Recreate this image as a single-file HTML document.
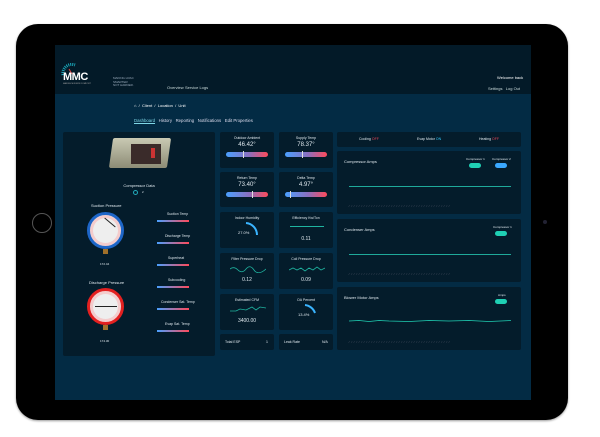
<!DOCTYPE html>
<html><head><meta charset="utf-8"><style>
*{margin:0;padding:0;box-sizing:border-box}
body{width:600px;height:437px;background:#fff;position:relative;overflow:hidden;font-family:"Liberation Sans",sans-serif;color:#dfe8ee}
.a{position:absolute}
.tab{left:16px;top:24px;width:552px;height:396px;background:#000;border-radius:22px;box-shadow:0 1px 2px #999}
.scr{left:55px;top:45px;width:476px;height:355px;background:#032b44;overflow:hidden}
.hdr{left:0;top:0;width:476px;height:49px;background:#031a28}
.t{position:absolute;font-size:4px;white-space:nowrap}
.card{position:absolute;background:#041c2b;border-radius:2px}
.c{text-align:center;width:100%;left:0}
.bar{position:absolute;height:5px;border-radius:3px;background:linear-gradient(90deg,#4aa0ff,#8a6fbf 55%,#ff4a5a)}
.mk{position:absolute;width:1px;height:7px;background:#ddd;top:-1px}
.sl{position:absolute;height:2px;background:linear-gradient(90deg,#4aa0ff,#ff4a5a);width:32px}
.pill{position:absolute;height:5px;width:12px;border-radius:3px;background:#1fd0b4}
</style></head><body>
<div class="a tab"></div>
<div class="a" style="left:32px;top:213px;width:20px;height:20px;border:1px solid #555;border-radius:50%"></div>
<div class="a" style="left:543px;top:220px;width:4px;height:4px;background:#223;border-radius:50%"></div>
<div class="a scr">
 <div class="a hdr">
  <svg class="a" style="left:6px;top:18px" width="20" height="14"><path d="M2 12 A9 9 0 0 1 14 2" stroke="#1aa5b8" stroke-width="3" fill="none" stroke-dasharray="1 1"/><path d="M8 6 l3 5" stroke="#e04040" stroke-width="1"/></svg>
  <div class="t" style="left:8px;top:26px;font-size:11px;font-weight:bold;color:#fff;letter-spacing:-0.5px">MMC</div>
  <div class="t" style="left:8px;top:38px;font-size:2px;color:#aaa">MAKING MODERN COMFORT</div>
  <div class="t" style="left:58px;top:32px;font-size:3px;line-height:3.5px;color:#9ab">MAKING HVAC<br>SMARTER<br>NOT HARDER.</div>
  <div class="t" style="left:112px;top:40px;color:#cdd">Overview</div>
  <div class="t" style="left:130px;top:40px;color:#cdd">Service Logs</div>
  <div class="t" style="left:442px;top:30px;color:#fff">Welcome back</div>
  <div class="t" style="left:433px;top:41px;color:#cdd">Settings&nbsp;&nbsp; Log Out</div>
 </div>
 <div class="t" style="left:79px;top:58px;color:#fff">⌂ &nbsp;/&nbsp; Client &nbsp;/&nbsp; Location &nbsp;/&nbsp; Unit</div>
 <div class="t" style="left:79px;top:73px;color:#dde;font-size:4.3px"><span style="color:#7fd6e6;text-decoration:underline">Dashboard</span>&nbsp;&nbsp; History&nbsp;&nbsp; Reporting&nbsp;&nbsp; Notifications&nbsp;&nbsp; Edit Properties</div>

 <!-- left panel -->
 <div class="card" style="left:8px;top:87px;width:152px;height:224px">
  <div class="a" style="left:48px;top:6px;width:58px;height:30px;background:linear-gradient(#c9c9b3,#8d8c76);transform:skewX(-8deg);border-radius:2px"></div>
  <div class="a" style="left:68px;top:12px;width:30px;height:20px;background:#3a2b2a"></div>
  <div class="a" style="left:88px;top:16px;width:4px;height:10px;background:#c33"></div>
  <div class="t c" style="top:51px">Compressor Data</div>
  <div class="a" style="left:70px;top:58px;width:5px;height:5px;border:1px solid #2ab;border-radius:50%"></div>
  <div class="t" style="left:79px;top:58px;font-size:3px">2</div>
  <div class="t" style="left:28px;top:71px">Suction Pressure</div>
  <div class="a" style="left:24px;top:80px;width:37px;height:37px;border-radius:50%;background:#eee;border:3px solid #1e66c8;box-shadow:inset 0 0 0 3px #f4cccc"></div>
  <div class="a" style="left:40px;top:90px;width:14px;height:1px;background:#222;transform:rotate(40deg)"></div>
  <div class="a" style="left:40px;top:117px;width:5px;height:5px;background:#a0702a"></div>
  <div class="t" style="left:37px;top:130px;font-size:3px">172.44</div>
  <div class="t" style="left:26px;top:148px">Discharge Pressure</div>
  <div class="a" style="left:24px;top:156px;width:37px;height:37px;border-radius:50%;background:#eee;border:3px solid #e32020;box-shadow:inset 0 0 0 3px #f4cccc"></div>
  <div class="a" style="left:32px;top:174px;width:22px;height:1px;background:#222"></div>
  <div class="a" style="left:40px;top:193px;width:5px;height:5px;background:#a0702a"></div>
  <div class="t" style="left:37px;top:207px;font-size:3px">174.30</div>
  <div class="t" style="left:104px;top:80px;font-size:3.5px">Suction Temp</div><div class="sl" style="left:94px;top:88px"></div>
  <div class="t" style="left:102px;top:102px;font-size:3.5px">Discharge Temp</div><div class="sl" style="left:94px;top:110px"></div>
  <div class="t" style="left:105px;top:124px;font-size:3.5px">Superheat</div><div class="sl" style="left:94px;top:132px"></div>
  <div class="t" style="left:105px;top:146px;font-size:3.5px">Subcooling</div><div class="sl" style="left:94px;top:154px"></div>
  <div class="t" style="left:98px;top:168px;font-size:3.5px">Condenser Sat. Temp</div><div class="sl" style="left:94px;top:176px"></div>
  <div class="t" style="left:102px;top:190px;font-size:3.5px">Evap Sat. Temp</div><div class="sl" style="left:94px;top:198px"></div>
 </div>

 <!-- middle cards -->
 <div class="card" style="left:165px;top:87px;width:54px;height:36px"><div class="t c" style="top:4px;font-size:3.5px">Outdoor Ambient</div><div class="t c" style="top:10px;font-size:6px">46.42°</div><div class="bar" style="left:6px;top:20px;width:42px"><div class="mk" style="left:17px"></div></div></div>
 <div class="card" style="left:224px;top:87px;width:54px;height:36px"><div class="t c" style="top:4px;font-size:3.5px">Supply Temp</div><div class="t c" style="top:10px;font-size:6px">78.37°</div><div class="bar" style="left:6px;top:20px;width:42px"><div class="mk" style="left:17px"></div></div></div>
 <div class="card" style="left:165px;top:127px;width:54px;height:35px"><div class="t c" style="top:4px;font-size:3.5px">Return Temp</div><div class="t c" style="top:10px;font-size:6px">73.40°</div><div class="bar" style="left:6px;top:20px;width:42px"><div class="mk" style="left:26px"></div></div></div>
 <div class="card" style="left:224px;top:127px;width:54px;height:35px"><div class="t c" style="top:4px;font-size:3.5px">Delta Temp</div><div class="t c" style="top:10px;font-size:6px">4.97°</div><div class="bar" style="left:6px;top:20px;width:42px"><div class="mk" style="left:5px"></div></div></div>
 <div class="card" style="left:165px;top:167px;width:54px;height:36px"><div class="t c" style="top:4px;font-size:3.5px">Indoor Humidity</div><svg class="a" style="left:25px;top:10px" width="16" height="16"><path d="M1 1 A12 12 0 0 1 12 13" stroke="#3ab4ff" stroke-width="2" fill="none"/></svg><div class="t" style="left:18px;top:18px;font-size:4px">27.0%</div></div>
 <div class="card" style="left:224px;top:167px;width:54px;height:36px"><div class="t c" style="top:4px;font-size:3.5px">Efficiency Kw/Ton</div><div class="a" style="left:11px;top:14px;width:34px;height:1px;background:#1fb4a0"></div><div class="t c" style="top:24px;font-size:5px">0.11</div></div>
 <div class="card" style="left:165px;top:208px;width:54px;height:36px"><div class="t c" style="top:4px;font-size:3.5px">Filter Pressure Drop</div><svg class="a" style="left:10px;top:12px" width="36" height="8"><path d="M0 4 Q4 1 8 5 T16 4 T24 5 T36 4" stroke="#1fb4a0" fill="none" stroke-width="0.8"/></svg><div class="t c" style="top:24px;font-size:5px">0.12</div></div>
 <div class="card" style="left:224px;top:208px;width:54px;height:36px"><div class="t c" style="top:4px;font-size:3.5px">Coil Pressure Drop</div><svg class="a" style="left:10px;top:12px" width="36" height="8"><path d="M0 5 L4 3 L8 5 L12 3 L16 6 L20 3 L24 5 L28 2 L32 5 L36 3" stroke="#1fb4a0" fill="none" stroke-width="0.8"/></svg><div class="t c" style="top:24px;font-size:5px">0.09</div></div>
 <div class="card" style="left:165px;top:249px;width:54px;height:36px"><div class="t c" style="top:4px;font-size:3.5px">Estimated CFM</div><svg class="a" style="left:10px;top:10px" width="36" height="10"><path d="M0 7 L6 7 L10 5 L16 6 L22 3 L26 6 L30 3 L36 4" stroke="#1fb4a0" fill="none" stroke-width="0.8"/></svg><div class="t c" style="top:24px;font-size:5px">3400.00</div></div>
 <div class="card" style="left:224px;top:249px;width:54px;height:36px"><div class="t c" style="top:4px;font-size:3.5px">OA Percent</div><svg class="a" style="left:25px;top:10px" width="16" height="16"><path d="M1 1 A12 12 0 0 1 11 9" stroke="#3ab4ff" stroke-width="2" fill="none"/></svg><div class="t" style="left:19px;top:18px;font-size:4px">13.4%</div></div>
 <div class="card" style="left:165px;top:289px;width:54px;height:16px"><div class="t" style="left:5px;top:6px;font-size:3.5px">Total ESP</div><div class="t" style="left:46px;top:6px;font-size:3.5px">1</div></div>
 <div class="card" style="left:224px;top:289px;width:54px;height:16px"><div class="t" style="left:5px;top:6px;font-size:3.5px">Leak Rate</div><div class="t" style="left:43px;top:6px;font-size:3.5px">N/A</div></div>

 <!-- right column -->
 <div class="card" style="left:282px;top:87px;width:184px;height:15px"><div class="t" style="left:22px;top:5px;font-size:3.5px">Cooling <span style="color:#e45">OFF</span></div><div class="t" style="left:80px;top:5px;font-size:3.5px">Evap Motor <span style="color:#3cf">ON</span></div><div class="t" style="left:142px;top:5px;font-size:3.5px">Heating <span style="color:#e45">OFF</span></div></div>
 <div class="card" style="left:282px;top:106px;width:184px;height:63px"><div class="t" style="left:7px;top:8px;font-size:4px">Compressor Amps</div><div class="t" style="left:129px;top:6px;font-size:3px">Compressor 1</div><div class="t" style="left:155px;top:6px;font-size:3px">Compressor 2</div><div class="pill" style="left:132px;top:12px"></div><div class="pill" style="left:158px;top:12px;background:#3aa8ff"></div><div class="a" style="left:12px;top:35px;width:162px;height:1px;background:#1fa99a"></div><div class="t" style="left:12px;top:53px;font-size:3px;color:#667;letter-spacing:2px">⁄⁄⁄⁄⁄⁄⁄⁄⁄⁄⁄⁄⁄⁄⁄⁄⁄⁄⁄⁄⁄⁄⁄⁄⁄⁄⁄⁄⁄⁄⁄⁄⁄⁄⁄⁄⁄⁄⁄⁄⁄</div></div>
 <div class="card" style="left:282px;top:174px;width:184px;height:63px"><div class="t" style="left:7px;top:8px;font-size:4px">Condenser Amps</div><div class="t" style="left:156px;top:6px;font-size:3px">Compressor 1</div><div class="pill" style="left:158px;top:12px"></div><div class="a" style="left:12px;top:35px;width:162px;height:1px;background:#1fa99a"></div><div class="t" style="left:12px;top:53px;font-size:3px;color:#667;letter-spacing:2px">⁄⁄⁄⁄⁄⁄⁄⁄⁄⁄⁄⁄⁄⁄⁄⁄⁄⁄⁄⁄⁄⁄⁄⁄⁄⁄⁄⁄⁄⁄⁄⁄⁄⁄⁄⁄⁄⁄⁄⁄⁄</div></div>
 <div class="card" style="left:282px;top:242px;width:184px;height:63px"><div class="t" style="left:7px;top:8px;font-size:4px">Blower Motor Amps</div><div class="t" style="left:161px;top:6px;font-size:3px">Amps</div><div class="pill" style="left:158px;top:12px"></div><svg class="a" style="left:12px;top:32px" width="162" height="4"><path d="M0 2 L10 1.5 L20 2.5 L30 1.5 L40 2 L60 2.5 L80 1.5 L100 2 L120 1.5 L140 2.5 L162 1.5" stroke="#1fd0b4" fill="none" stroke-width="0.8"/></svg><div class="t" style="left:12px;top:53px;font-size:3px;color:#667;letter-spacing:2px">⁄⁄⁄⁄⁄⁄⁄⁄⁄⁄⁄⁄⁄⁄⁄⁄⁄⁄⁄⁄⁄⁄⁄⁄⁄⁄⁄⁄⁄⁄⁄⁄⁄⁄⁄⁄⁄⁄⁄⁄⁄</div></div>
</div>
</body></html>
